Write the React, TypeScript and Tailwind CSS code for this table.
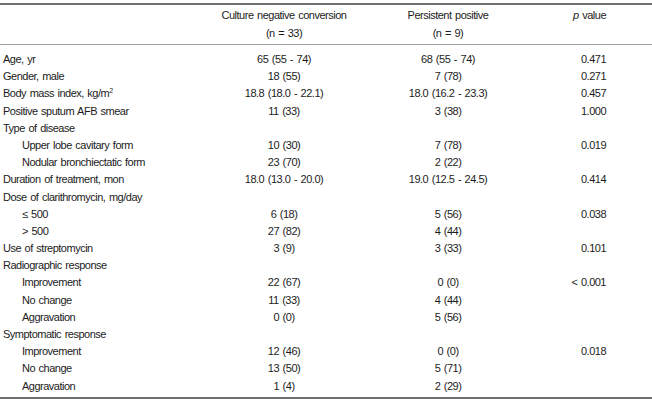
import React from "react";

type Row = { label: React.ReactNode; indent?: boolean; a?: string; b?: string; p?: string };

const rows: Row[] = [
  { label: "Age, yr", a: "65 (55 - 74)", b: "68 (55 - 74)", p: "0.471" },
  { label: "Gender, male", a: "18 (55)", b: "7 (78)", p: "0.271" },
  {
    label: (
      <>
        Body mass index, kg/m<sup className="text-[7px] relative -top-[4px] align-baseline">2</sup>
      </>
    ),
    a: "18.8 (18.0 - 22.1)",
    b: "18.0 (16.2 - 23.3)",
    p: "0.457",
  },
  { label: "Positive sputum AFB smear", a: "11 (33)", b: "3 (38)", p: "1.000" },
  { label: "Type of disease" },
  { label: "Upper lobe cavitary form", indent: true, a: "10 (30)", b: "7 (78)", p: "0.019" },
  { label: "Nodular bronchiectatic form", indent: true, a: "23 (70)", b: "2 (22)" },
  { label: "Duration of treatment, mon", a: "18.0 (13.0 - 20.0)", b: "19.0 (12.5 - 24.5)", p: "0.414" },
  { label: "Dose of clarithromycin, mg/day" },
  { label: "≤ 500", indent: true, a: "6 (18)", b: "5 (56)", p: "0.038" },
  { label: "> 500", indent: true, a: "27 (82)", b: "4 (44)" },
  { label: "Use of streptomycin", a: "3 (9)", b: "3 (33)", p: "0.101" },
  { label: "Radiographic response" },
  { label: "Improvement", indent: true, a: "22 (67)", b: "0 (0)", p: "< 0.001" },
  { label: "No change", indent: true, a: "11 (33)", b: "4 (44)" },
  { label: "Aggravation", indent: true, a: "0 (0)", b: "5 (56)" },
  { label: "Symptomatic response" },
  { label: "Improvement", indent: true, a: "12 (46)", b: "0 (0)", p: "0.018" },
  { label: "No change", indent: true, a: "13 (50)", b: "5 (71)" },
  { label: "Aggravation", indent: true, a: "1 (4)", b: "2 (29)" },
];

export default function App() {
  return (
    <div
      className="w-[652px] h-[403px] bg-white pt-[3px] text-[11px] tracking-[-0.5px] [word-spacing:1px] text-[#1c1c1c]"
      style={{ fontFamily: '"Liberation Sans", Arial, sans-serif' }}
    >
      <div className="border-t-2 border-[#707070]">
        <div className="grid grid-cols-[206px_156px_172px_72px] h-[40px] pt-[1px] leading-[18px] border-b border-[#a0a0a0]">
          <div />
          <div className="text-center">
            <div>Culture negative conversion</div>
            <div>(n = 33)</div>
          </div>
          <div className="text-center">
            <div>Persistent positive</div>
            <div>(n = 9)</div>
          </div>
          <div className="text-right">
            <i>p</i> value
          </div>
        </div>
        <div className="pt-[6px] pb-[2px] border-b-2 border-[#707070]">
          {rows.map((r, i) => (
            <div key={i} className="grid grid-cols-[206px_156px_172px_72px] h-[17.2px] leading-[17.2px]">
              <div className={r.indent ? "pl-[22px] whitespace-nowrap" : "pl-[3px] whitespace-nowrap"}>{r.label}</div>
              <div className="text-center">{r.a}</div>
              <div className="text-center">{r.b}</div>
              <div className="text-right">{r.p}</div>
            </div>
          ))}
        </div>
      </div>
    </div>
  );
}
